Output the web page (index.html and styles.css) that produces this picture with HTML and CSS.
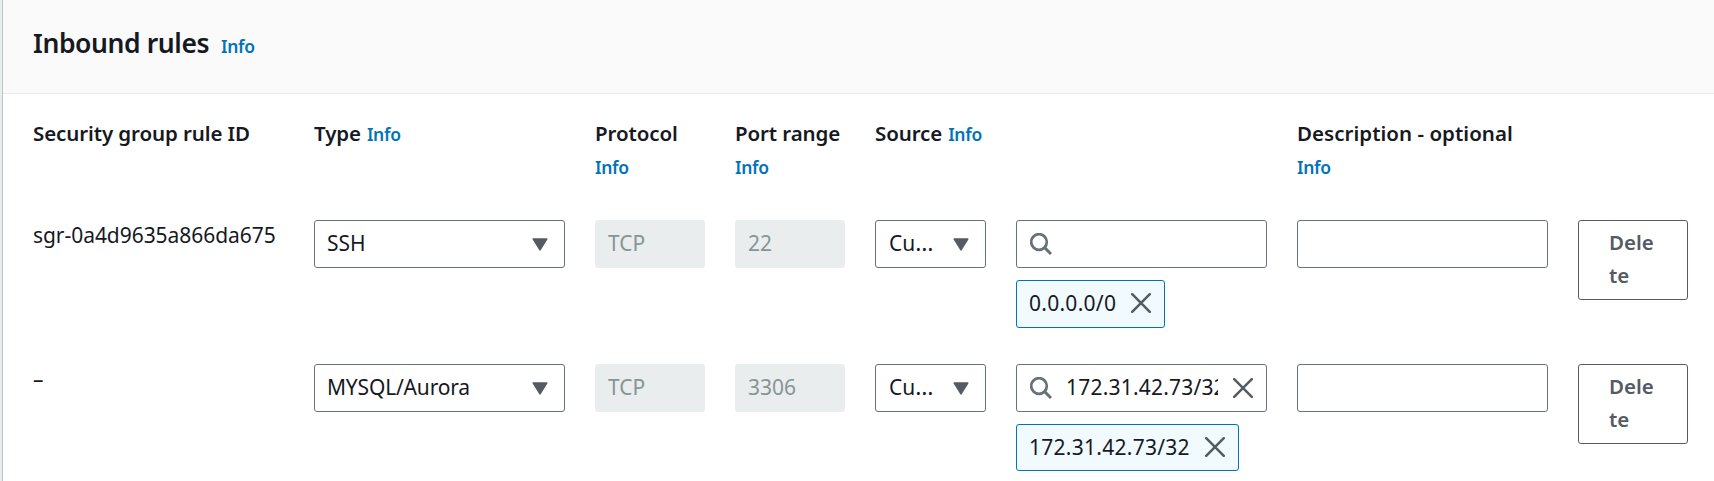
FILE: index.html
```html
<!DOCTYPE html>
<html lang="en">
<head>
<meta charset="utf-8">
<title>Inbound rules</title>
<link rel="stylesheet" href="styles.css">
</head>
<body>
<svg class="defs" width="0" height="0">
  <symbol id="caret" viewBox="0 0 16 13"><path d="M1.3 1h13.4L8 11.8z" fill="currentColor" stroke="currentColor" stroke-width="1.6" stroke-linejoin="round"/></symbol>
  <symbol id="close" viewBox="0 0 20 20"><path d="M1.2 1.2l17.6 17.6M18.8 1.2L1.2 18.8" fill="none" stroke="currentColor" stroke-width="2.5" stroke-linecap="round"/></symbol>
  <symbol id="search" viewBox="0 0 22 22"><circle cx="9" cy="9" r="7.8" fill="none" stroke="currentColor" stroke-width="2.7"/><path d="M14.6 14.6l6.4 6.4" fill="none" stroke="currentColor" stroke-width="2.9"/></symbol>
</svg>
<main class="panel">
  <header class="panel-header">
    <h2 class="title">Inbound rules</h2><a class="info">Info</a>
  </header>
  <section class="rules">
    <div class="grid labels">
      <div class="label"><span>Security group rule ID</span></div>
      <div class="label"><span>Type</span><a class="info">Info</a></div>
      <div class="label stack"><span>Protocol</span><a class="info">Info</a></div>
      <div class="label stack"><span>Port range</span><a class="info">Info</a></div>
      <div class="label source"><span>Source</span><a class="info">Info</a></div>
      <div class="label stack desc"><span>Description - optional</span><a class="info">Info</a></div>
    </div>
    <div class="grid row">
      <div class="rule-id">sgr-0a4d9635a866da675</div>
      <div class="field select"><span>SSH</span><svg class="caret"><use href="#caret"/></svg></div>
      <div class="field disabled"><span>TCP</span></div>
      <div class="field disabled"><span>22</span></div>
      <div class="field select small"><span>Cu<span class="dots">…</span></span><svg class="caret"><use href="#caret"/></svg></div>
      <div class="source-cell">
        <div class="field search"><svg class="glass"><use href="#search"/></svg></div>
        <div class="token"><span class="cidr">0.0.0.0/0</span><svg class="close"><use href="#close"/></svg></div>
      </div>
      <div class="field"></div>
      <button class="delete">Dele<br>te</button>
    </div>
    <div class="grid row row-last">
      <div class="rule-id">–</div>
      <div class="field select"><span class="long">MYSQL/Aurora</span><svg class="caret"><use href="#caret"/></svg></div>
      <div class="field disabled"><span>TCP</span></div>
      <div class="field disabled"><span>3306</span></div>
      <div class="field select small"><span>Cu<span class="dots">…</span></span><svg class="caret"><use href="#caret"/></svg></div>
      <div class="source-cell">
        <div class="field search"><svg class="glass"><use href="#search"/></svg><span class="query">172.31.42.73/32</span><svg class="close"><use href="#close"/></svg></div>
        <div class="token last"><span class="cidr">172.31.42.73/32</span><svg class="close"><use href="#close"/></svg></div>
      </div>
      <div class="field"></div>
      <button class="delete">Dele<br>te</button>
    </div>
  </section>
</main>
</body>
</html>
```
FILE: styles.css
```css
* { box-sizing: border-box; }
body {
  margin: 0;
  height: 481px;
  overflow: hidden;
  background: #eaeded;
  color: #16191f;
  font: 21px/33px "Noto Sans", sans-serif;
}
.defs { position: absolute; }
.panel {
  margin-left: 2px;
  height: 481px;
  border-left: 1px solid #bcc5c6;
  background: #fff;
}
.panel-header {
  display: flex;
  align-items: baseline;
  height: 94px;
  padding: 26px 0 0 30px;
  border-bottom: 1px solid #eaeded;
  background: #fafafa;
}
.title {
  margin: 0;
  width: 188px;
  font-size: 26.5px;
  line-height: 34px;
  font-weight: 600;
  letter-spacing: -0.4px;
  white-space: nowrap;
}
.info { color: #0073bb; font-size: 17.5px; font-weight: 650; letter-spacing: -0.3px; }
.rules { padding: 23px 26px 0 30px; }
.grid {
  display: grid;
  grid-template-columns: 251px 251px 110px 110px 111px 251px 251px 110px;
  column-gap: 30px;
  align-items: start;
}
.labels { height: 103px; }
.label {
  display: flex;
  align-items: baseline;
  gap: 6px;
  font-size: 20.5px;
  font-weight: 600;
  letter-spacing: -0.1px;
  white-space: nowrap;
}
.stack { flex-direction: column; align-items: flex-start; gap: 1px; }
.source { grid-column: 5 / 7; }
.desc { letter-spacing: 0.03px; }
.row { height: 144px; }
.row-last { height: 110px; }
.rule-id { margin-top: -1px; letter-spacing: -0.05px; white-space: nowrap; }
.field {
  display: flex;
  align-items: center;
  height: 48px;
  padding: 0 12px 2px;
  border: 1px solid #687078;
  border-radius: 3px;
  background: #fff;
  white-space: nowrap;
}
.select { justify-content: space-between; padding-right: 16px; }
.small { padding-left: 13px; }
.long { letter-spacing: -0.18px; }
.dots { font-size: 23px; line-height: 1; }
.caret { width: 16px; height: 13px; color: #545b64; margin-top: 2px; flex: none; }
.disabled { background: #eaeded; border-color: #eaeded; color: #879596; }
.glass { width: 22px; height: 22px; color: #687078; flex: none; margin: 2px 0 0 1px; }
.close { width: 20px; height: 20px; color: #545b64; flex: none; }
.search { width: 251px; }
.search .close { margin: 2px 0 0 15px; }
.cidr { letter-spacing: 0.27px; }
.query { width: 152px; overflow: hidden; margin-left: 14px; letter-spacing: 0.2px; }
.source-cell { display: flex; flex-direction: column; align-items: flex-start; gap: 12px; }
.token {
  display: flex;
  align-items: center;
  gap: 15px;
  height: 48px;
  padding: 0 13px 2px 12px;
  border: 1px solid #0073bb;
  border-radius: 3px;
  background: #f1faff;
  white-space: nowrap;
}
.last { height: 47px; padding-bottom: 1px; }
.delete {
  height: 80px;
  padding: 0 0 2px 30px;
  border: 1px solid #545b64;
  border-radius: 3px;
  background: #fff;
  color: #545b64;
  font: 600 20.5px/33px "Noto Sans", sans-serif;
  text-align: left;
}
```
